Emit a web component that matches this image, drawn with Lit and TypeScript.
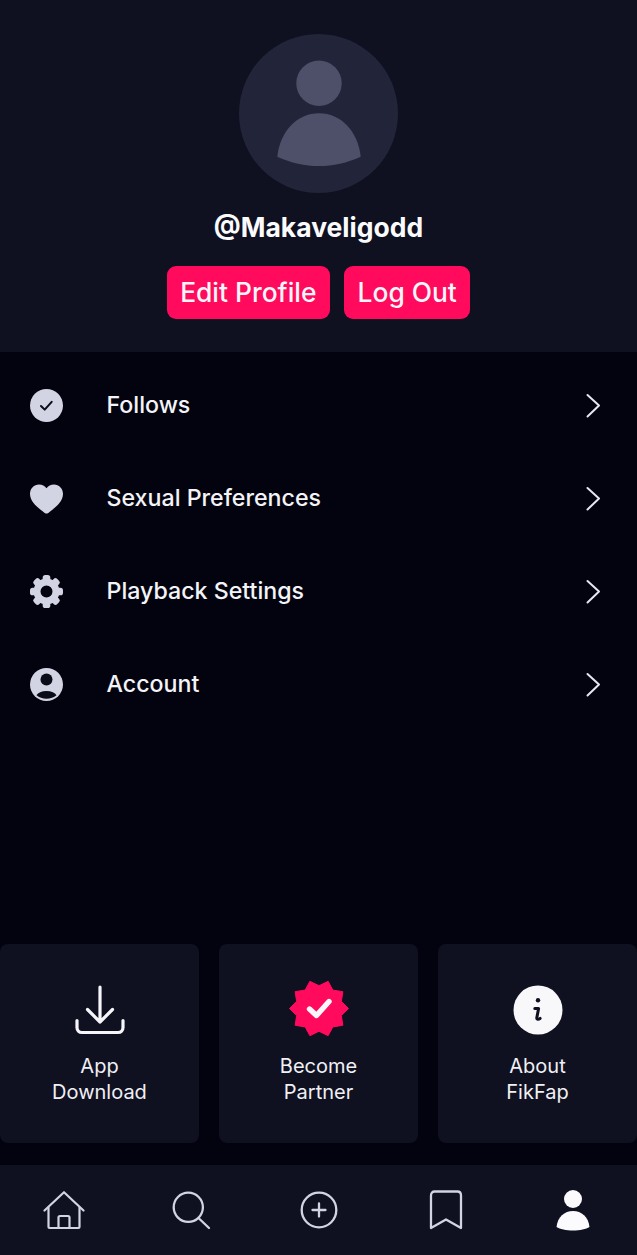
import { LitElement, html, css, svg } from "lit";
import { customElement } from "lit/decorators.js";

const star = (() => {
  const pts: string[] = [];
  const n = 10;
  for (let i = 0; i < n * 2; i++) {
    const r = i % 2 === 0 ? 29.5 : 23.5;
    const a = (i * Math.PI) / n;
    pts.push(`${(30 + r * Math.cos(a)).toFixed(2)},${(28.5 + r * Math.sin(a) * 0.97).toFixed(2)}`);
  }
  return pts.join(" ");
})();

const chevron = html`<svg class="chev" width="16" height="26" viewBox="0 0 16 26" fill="none"><path d="M2.500 2L14 12.500 2.500 23.500" stroke="#e6e7f0" stroke-width="2" stroke-linecap="round" stroke-linejoin="round"/></svg>`;

const icons = {
  check: html`<svg width="33" height="33" viewBox="0 0 33 33"><circle cx="16.5" cy="16.5" r="16.5" fill="#d2d4e4"/><path d="M11 17l3.700 3.600 7-7.800" fill="none" stroke="#0b0c1a" stroke-width="2" stroke-linecap="round" stroke-linejoin="round"/></svg>`,
  heart: html`<svg width="33" height="30" viewBox="0 0 33 31" preserveAspectRatio="none"><path d="M16.5 30.5c-1 0-1.800-.6-3-1.600C7 23.800 0 18.500 0 10.200 0 4.500 4.100 .5 9 .5c3.200 0 5.900 1.500 7.500 4 1.600-2.500 4.300-4 7.500-4 4.900 0 9 4 9 9.700 0 8.300-7 13.600-13.500 18.700-1.200 1-2 1.600-3 1.600z" fill="#d2d4e4"/></svg>`,
  gear: html`<svg width="33" height="33" viewBox="0 0 33 33">
    ${[0, 45, 90, 135, 180, 225, 270, 315].map(
      (a) => svg`<rect x="12.700" y="0" width="7.600" height="9" rx="2.600" fill="#d2d4e4" transform="rotate(${a} 16.5 16.5)"/>`
    )}
    <circle cx="16.5" cy="16.500" r="9.500" fill="none" stroke="#d2d4e4" stroke-width="7"/>
  </svg>`,
  account: html`<svg width="33" height="33" viewBox="0 0 33 33"><circle cx="16.5" cy="16.5" r="16.5" fill="#d2d4e4"/><circle cx="16.5" cy="11.500" r="6" fill="#0b0c1a"/><path d="M6.500 27.200C8 24.700 11.500 23 16.500 23s8.500 1.700 10 4.200c-2.600 2.200-6.100 3.600-10 3.600s-7.400-1.400-10-3.600z" fill="#0b0c1a"/></svg>`,
};

const menu = [
  { label: "Follows", icon: icons.check },
  { label: "Sexual Preferences", icon: icons.heart },
  { label: "Playback Settings", icon: icons.gear },
  { label: "Account", icon: icons.account },
];

const cards = [
  {
    lines: ["App", "Download"],
    icon: html`<svg width="50" height="50" viewBox="0 0 50 50" fill="none" stroke="#f6f6fa" stroke-width="3.200" stroke-linecap="round" stroke-linejoin="round"><path d="M25 2v35M12.500 24.500L25 37l12.500-12.500"/><path d="M2 35.500v7c0 3 2 5 5 5h36c3 0 5-2 5-5v-7"/></svg>`,
  },
  {
    lines: ["Become", "Partner"],
    icon: html`<svg width="60" height="60" viewBox="0 0 60 60"><polygon points=${star} fill="#ff0a5c" stroke="#ff0a5c" stroke-width="1" stroke-linejoin="round"/><path d="M20.500 29l7 6.500 12.500-14" fill="none" stroke="#f8f8fb" stroke-width="5.400" stroke-linecap="round" stroke-linejoin="round"/></svg>`,
  },
  {
    lines: ["About", "FikFap"],
    icon: html`<svg width="50" height="50" viewBox="0 0 50 50"><circle cx="25" cy="25" r="24.500" fill="#f8f8fb"/><circle cx="25" cy="15.300" r="2.200" fill="#0e101f"/><path d="M21.800 23.500h3.800l-1.800 9.300c-.3 1.500 1.300 2 3.300.6" fill="none" stroke="#0e101f" stroke-width="3" stroke-linecap="round" stroke-linejoin="round"/></svg>`,
  },
];

const navColor = "#d2d4e4";
const nav = [
  html`<svg width="42" height="42" viewBox="0 0 42 42" fill="none" stroke=${navColor} stroke-width="2.200" stroke-linecap="round" stroke-linejoin="round"><path d="M1.500 21.500L21 3.200l19.500 18.300"/><path d="M5.500 18.500V38c0 .7.300 1 1 1h29c.7 0 1-.3 1-1V18.500"/><path d="M15.500 39V28.500c0-1 .5-1.500 1.500-1.500h8c1 0 1.500.5 1.500 1.500V39"/></svg>`,
  html`<svg width="40" height="40" viewBox="0 0 40 40" fill="none" stroke=${navColor} stroke-width="2.300" stroke-linecap="round"><circle cx="17.300" cy="17.300" r="14.600"/><path d="M28 28.500l10 9.500"/></svg>`,
  html`<svg width="38" height="38" viewBox="0 0 38 38" fill="none" stroke=${navColor} stroke-width="2.300" stroke-linecap="round"><circle cx="19" cy="19" r="17.300"/><path d="M19 12.500v13M12.500 19h13"/></svg>`,
  html`<svg width="34" height="40" viewBox="0 0 34 40" fill="none" stroke=${navColor} stroke-width="2.300" stroke-linecap="round" stroke-linejoin="round"><path d="M2 5.500c0-2.500 1.500-4 3.500-4h23c2 0 3.500 1.500 3.500 4V38l-15-8.500L2 38z"/></svg>`,
  html`<svg width="34" height="42" viewBox="0 0 34 42" fill="#fbfbfd"><circle cx="17" cy="10" r="9"/><path d="M.5 38C1.500 28 8.500 22 17 22s15.500 6 16.500 16c-3.500 2.200-9.500 3.500-16.500 3.500S4 40.200.5 38z"/></svg>`,
];

@customElement("app-root")
export class AppRoot extends LitElement {
  static styles = css`
    :host {
      display: block;
      width: 637px;
      height: 1255px;
      overflow: hidden;
      background: #03030f;
      font-family: Inter, "Liberation Sans", sans-serif;
      color: #f6f6fa;
    }
    .page {
      display: flex;
      flex-direction: column;
      height: 1255px;
    }
    .header {
      height: 352px;
      flex: none;
      box-sizing: border-box;
      padding-top: 34px;
      background: #0f1020;
      display: flex;
      flex-direction: column;
      align-items: center;
    }
    .avatar {
      width: 159px;
      height: 159px;
      display: block;
    }
    .name {
      margin-top: 17px;
      font-size: 26.5px;
      line-height: 34px;
      font-weight: 700;
      color: #fbfbfd;
    }
    .actions {
      margin-top: 22px;
      display: flex;
      gap: 14px;
    }
    .btn {
      height: 53px;
      padding: 0 13.5px 1px;
      border: 0;
      border-radius: 9px;
      background: #ff0a5c;
      color: #f9f5f8;
      font: 500 26.4px Inter, "Liberation Sans", sans-serif;
    }
    .menu {
      flex: 1;
      padding-top: 7px;
    }
    .row {
      height: 93px;
      display: flex;
      align-items: center;
      padding: 0 36px 0 30px;
    }
    .row-icon {
      width: 33px;
      height: 33px;
      display: flex;
      align-items: center;
      justify-content: center;
      flex: none;
    }
    .row-label {
      flex: 1;
      margin-left: 43.5px;
      margin-bottom: 1px;
      font-size: 23.2px;
      font-weight: 500;
      color: #f4f4f8;
    }
    .chev {
      display: block;
    }
    .cards {
      display: grid;
      grid-template-columns: repeat(3, 199px);
      justify-content: space-between;
      flex: none;
    }
    .card {
      height: 199px;
      box-sizing: border-box;
      border-radius: 8px;
      background: #0f1020;
      display: flex;
      flex-direction: column;
      align-items: center;
    }
    .card-icon {
      height: 60px;
      margin-top: 36px;
      display: flex;
      align-items: center;
      justify-content: center;
    }
    .card-text {
      margin-top: 13px;
      font-size: 20px;
      line-height: 26px;
      text-align: center;
      color: #f0f0f5;
    }
    .nav {
      margin-top: 22px;
      height: 90px;
      flex: none;
      background: #0f1020;
      display: flex;
    }
    .nav-item {
      flex: 1;
      display: flex;
      align-items: center;
      justify-content: center;
    }
    .nav-item svg {
      display: block;
    }
  `;

  render() {
    return html`<div class="page">
      <section class="header">
        <svg class="avatar" viewBox="0 0 159 159">
          <circle cx="79.500" cy="79.500" r="79.500" fill="#222439"/>
          <circle cx="80" cy="49.300" r="22.700" fill="#4e5069"/>
          <path d="M38.300 122.700C41 97.500 58 79.300 80 79.300s39 18.200 41.700 43.400C108 129 94 132 80 132s-28-3-41.700-9.300z" fill="#4e5069"/>
        </svg>
        <div class="name">@Makaveligodd</div>
        <div class="actions">
          <button class="btn">Edit Profile</button>
          <button class="btn">Log Out</button>
        </div>
      </section>
      <section class="menu">
        ${menu.map(
          (m) => html`<div class="row">
            <span class="row-icon">${m.icon}</span>
            <span class="row-label">${m.label}</span>
            ${chevron}
          </div>`
        )}
      </section>
      <section class="cards">
        ${cards.map(
          (c) => html`<div class="card">
            <div class="card-icon">${c.icon}</div>
            <div class="card-text">${c.lines[0]}<br />${c.lines[1]}</div>
          </div>`
        )}
      </section>
      <nav class="nav">
        ${nav.map((n) => html`<div class="nav-item">${n}</div>`)}
      </nav>
    </div>`;
  }
}
